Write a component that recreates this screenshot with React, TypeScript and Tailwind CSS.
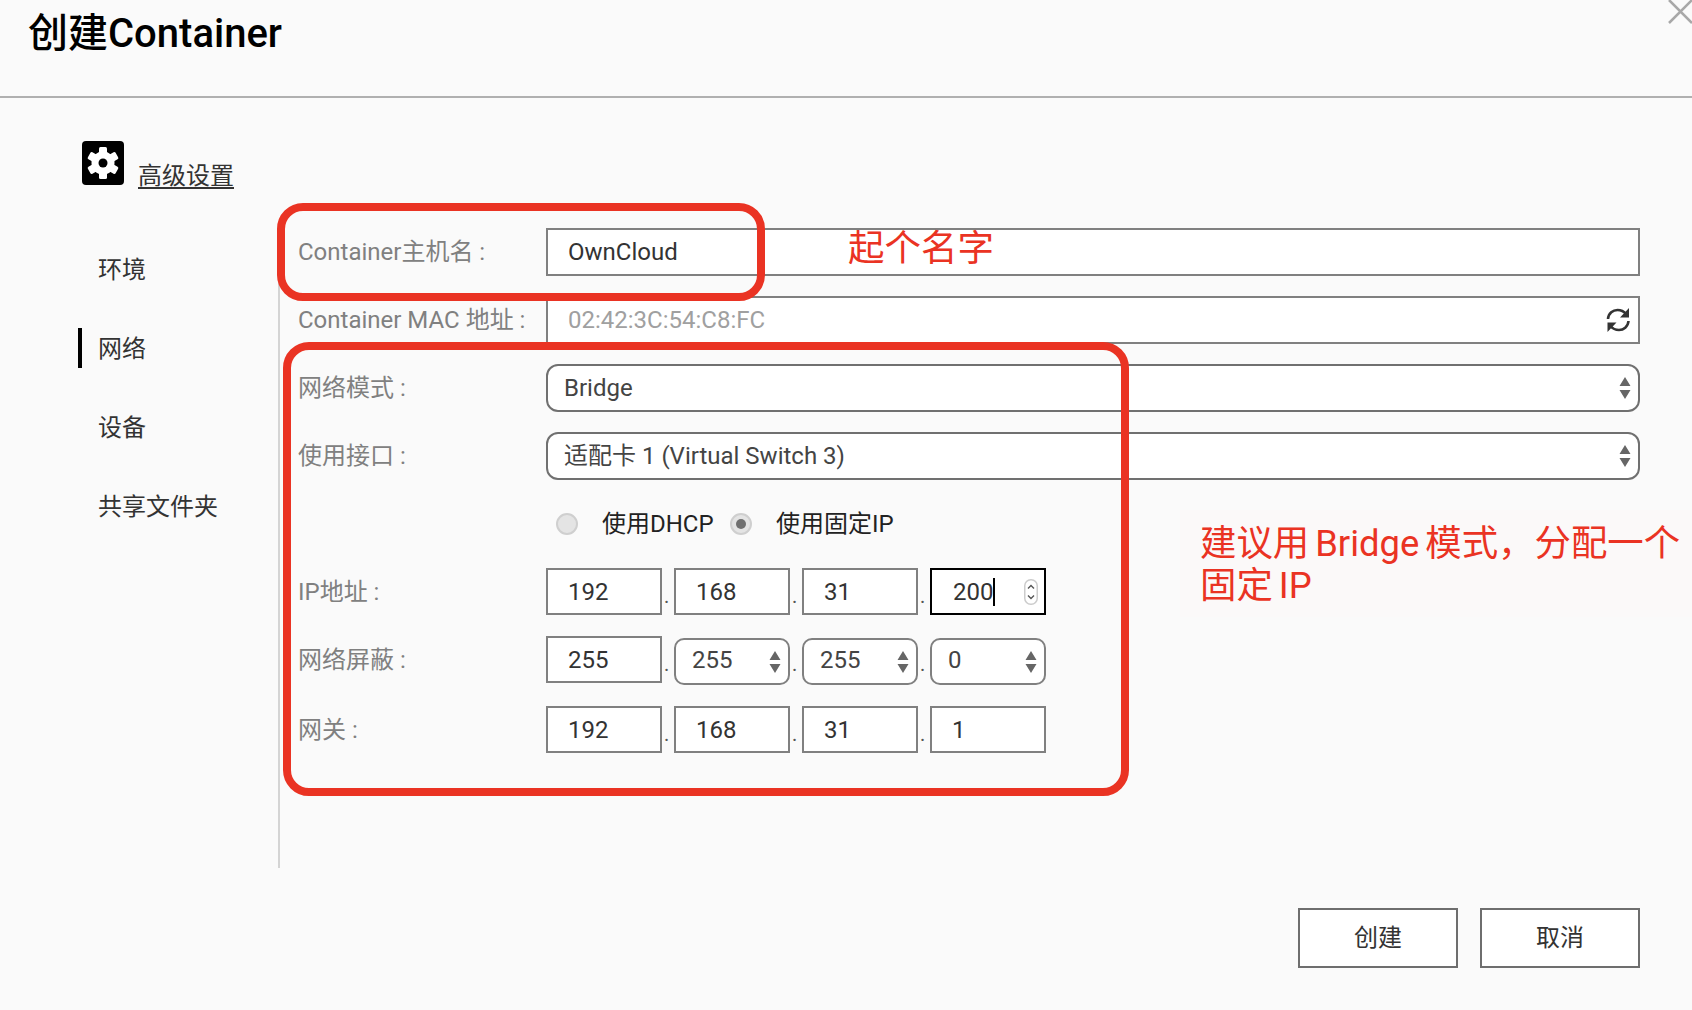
import React from 'react';

const labelCls = "w-[248px] shrink-0 text-[24px] leading-none text-[#808080] whitespace-nowrap";

const UpDown = ({ className = "" }: { className?: string }) => (
  <svg width="12" height="24" viewBox="0 0 12 24" className={className}>
    <path d="M6 1 L11.5 10 H0.5 Z M0.5 14 H11.5 L6 23 Z" fill="#666" />
  </svg>
);

const Refresh = () => (
  <svg width="26" height="28" viewBox="0 0 26 28" fill="none">
    <path d="M3 13 C3.5 7 8 4 12.5 4 C16 4 19 5.5 21 8" stroke="#333" strokeWidth="2.6" />
    <path d="M23.5 15 C23 21 18.5 24 14 24 C10.5 24 7.5 22.5 5.5 20" stroke="#333" strokeWidth="2.6" />
    <path d="M24 2 V11.5 H15 Z" fill="#333" />
    <path d="M2.5 26 V16.5 H11.5 Z" fill="#333" />
  </svg>
);

const GearBox = () => (
  <svg width="42" height="44" viewBox="0 0 42 44">
    <rect x="0" y="0" width="42" height="44" rx="4" fill="#000" />
    <g fill="#fff" transform="translate(21 22)">
      <circle r="11.5" />
      {[0, 60, 120, 180, 240, 300].map((deg) => (
        <rect key={deg} x="-4" y="-16" width="8" height="8" rx="1.5" transform={`rotate(${deg})`} />
      ))}
      <circle r="4.5" fill="#000" />
    </g>
  </svg>
);

const Radio = ({ checked = false }: { checked?: boolean }) => (
  <span className="flex h-[22px] w-[22px] shrink-0 items-center justify-center rounded-full border-2 border-[#cfcfcf] bg-[#e4e4e4]">
    {checked && <span className="h-[10px] w-[10px] rounded-full bg-[#707070]" />}
  </span>
);

const Field = ({ label, children, className = "" }: { label: string; children: React.ReactNode; className?: string }) => (
  <div className={`flex items-center ${className}`}>
    <div className={labelCls}>{label}</div>
    {children}
  </div>
);

const Box = ({ value }: { value: string }) => (
  <div className="flex h-[47px] w-[116px] items-center border-2 border-[#808080] bg-white pl-[20px] text-[24px] text-[#333]">
    {value}
  </div>
);

const SelectBox = ({ value }: { value: string }) => (
  <div className="flex h-[47px] w-[116px] translate-y-[2px] items-center justify-between rounded-[10px] border-2 border-[#808080] bg-white pl-[16px] pr-[7px] text-[24px] text-[#444]">
    <span className="mb-[4px]">{value}</span>
    <UpDown />
  </div>
);

const Dot = () => <div className="flex h-[47px] w-[12px] items-end pb-[9px] pl-[2px] text-[20px] leading-none text-[#555]">.</div>;

const App = () => {
  const navItems = ["环境", "网络", "设备", "共享文件夹"];

  return (
    <div className="relative h-[1010px] w-[1692px] overflow-hidden bg-[#fafafa] font-['Roboto','Noto_Sans_CJK_SC',sans-serif]">
      {/* Header */}
      <div className="h-[98px] border-b-2 border-[#b0b0b0] pl-[28px] pt-[10px]">
        <h1 className="text-[40px] font-medium leading-[48px] text-black">创建Container</h1>
      </div>
      <button className="absolute right-0 top-0 text-[#a8a8a8]">
        <svg width="25" height="24" viewBox="0 0 25 24" stroke="currentColor" strokeWidth="2.5" fill="none">
          <path d="M2 0 L25 23 M25 0 L2 23" />
        </svg>
      </button>

      {/* Advanced settings */}
      <div className="flex h-[130px] items-start pl-[82px] pt-[43px]">
        <GearBox />
        <span className="ml-[14px] mt-[21px] text-[24px] leading-[28px] text-[#333] underline underline-offset-[3px]">高级设置</span>
      </div>

      <div className="flex h-[640px]">
        {/* Sidebar */}
        <div className="flex w-[278px] shrink-0 flex-col gap-[39px] pl-[78px] pt-[21px]">
          {navItems.map((item, i) => (
            <div
              key={item}
              className={`flex h-[40px] items-center border-l-4 pl-[16px] pt-[2px] text-[24px] text-[#333] ${i === 1 ? "border-black" : "border-transparent"}`}
            >
              {item}
            </div>
          ))}
        </div>

        {/* Form */}
        <div className="flex-1 border-l-2 border-[#d4d4d4] pl-[18px]">
          <Field label="Container主机名 :">
            <div className="flex h-[48px] w-[1094px] items-center border-2 border-[#808080] bg-white pl-[20px] text-[24px] text-[#333]">OwnCloud</div>
          </Field>
          <Field label="Container MAC 地址 :" className="mt-[20px]">
            <div className="flex h-[48px] w-[1094px] items-center justify-between border-2 border-[#808080] bg-white pl-[20px] pr-[7px] text-[24px] text-[#a0a0a0]">
              <span>02:42:3C:54:C8:FC</span>
              <Refresh />
            </div>
          </Field>
          <Field label="网络模式 :" className="mt-[20px]">
            <div className="flex h-[48px] w-[1094px] items-center justify-between rounded-[12px] border-2 border-[#707070] bg-white pl-[16px] pr-[7px] text-[24px] text-[#444]">
              <span>Bridge</span>
              <UpDown />
            </div>
          </Field>
          <Field label="使用接口 :" className="mt-[20px]">
            <div className="flex h-[48px] w-[1094px] items-center justify-between rounded-[12px] border-2 border-[#707070] bg-white pl-[16px] pr-[7px] text-[24px] text-[#444]">
              <span>适配卡 1 (Virtual Switch 3)</span>
              <UpDown />
            </div>
          </Field>

          <div className="mt-[32px] flex h-[24px] w-fit items-center pl-[258px] text-[24px] text-[#222]">
            <Radio />
            <span className="ml-[24px] w-[128px]">使用DHCP</span>
            <Radio checked />
            <span className="ml-[24px]">使用固定IP</span>
          </div>

          <Field label="IP地址 :" className="mt-[32px]">
            <Box value="192" />
            <Dot />
            <Box value="168" />
            <Dot />
            <Box value="31" />
            <Dot />
            <div className="relative flex h-[47px] w-[116px] items-center border-2 border-black bg-white pl-[21px] text-[24px] text-[#333]">
              <span className="border-r-2 border-black leading-[28px]">200</span>
              <svg width="14" height="26" viewBox="0 0 14 26" fill="none" className="absolute right-[6px] top-[9px]">
                <rect x="0.75" y="0.75" width="12.5" height="24.5" rx="6" stroke="#ccc" strokeWidth="1.5" />
                <path d="M4 9.5 L7 6.5 L10 9.5 M4 16.5 L7 19.5 L10 16.5" stroke="#555" strokeWidth="1.4" />
              </svg>
            </div>
          </Field>
          <Field label="网络屏蔽 :" className="mt-[21px]">
            <Box value="255" />
            <Dot />
            <SelectBox value="255" />
            <Dot />
            <SelectBox value="255" />
            <Dot />
            <SelectBox value="0" />
          </Field>
          <Field label="网关 :" className="mt-[23px]">
            <Box value="192" />
            <Dot />
            <Box value="168" />
            <Dot />
            <Box value="31" />
            <Dot />
            <Box value="1" />
          </Field>
        </div>
      </div>

      {/* Footer buttons */}
      <div className="mt-[40px] flex justify-end gap-[22px] pr-[52px]">
        <button className="h-[60px] w-[160px] border-2 border-[#6e6e6e] bg-white text-[24px] text-[#333]">创建</button>
        <button className="h-[60px] w-[160px] border-2 border-[#6e6e6e] bg-white text-[24px] text-[#333]">取消</button>
      </div>

      {/* Red annotations over the screenshot */}
      <div className="absolute left-[277px] top-[203px] h-[98px] w-[488px] rounded-[26px] border-[8px] border-[#ea3323]" />
      <div className="absolute left-[283px] top-[342px] h-[454px] w-[846px] rounded-[26px] border-[8px] border-[#ea3323]" />
      <div className="absolute left-[848px] top-[222px] text-[36.5px] leading-[48px] text-[#ea3323] font-['Noto_Sans_CJK_SC',sans-serif]">起个名字</div>
      <div className="absolute left-[1180px] top-[510px] h-[107px] w-[512px] bg-[#fbf9f9] pl-[20px] pt-[13px] text-[36.4px] leading-[42px] text-[#ea3323] whitespace-nowrap [word-spacing:-3px]">
        <div>建议用 Bridge 模式，分配一个</div>
        <div>固定 IP</div>
      </div>
    </div>
  );
};

export default App;
